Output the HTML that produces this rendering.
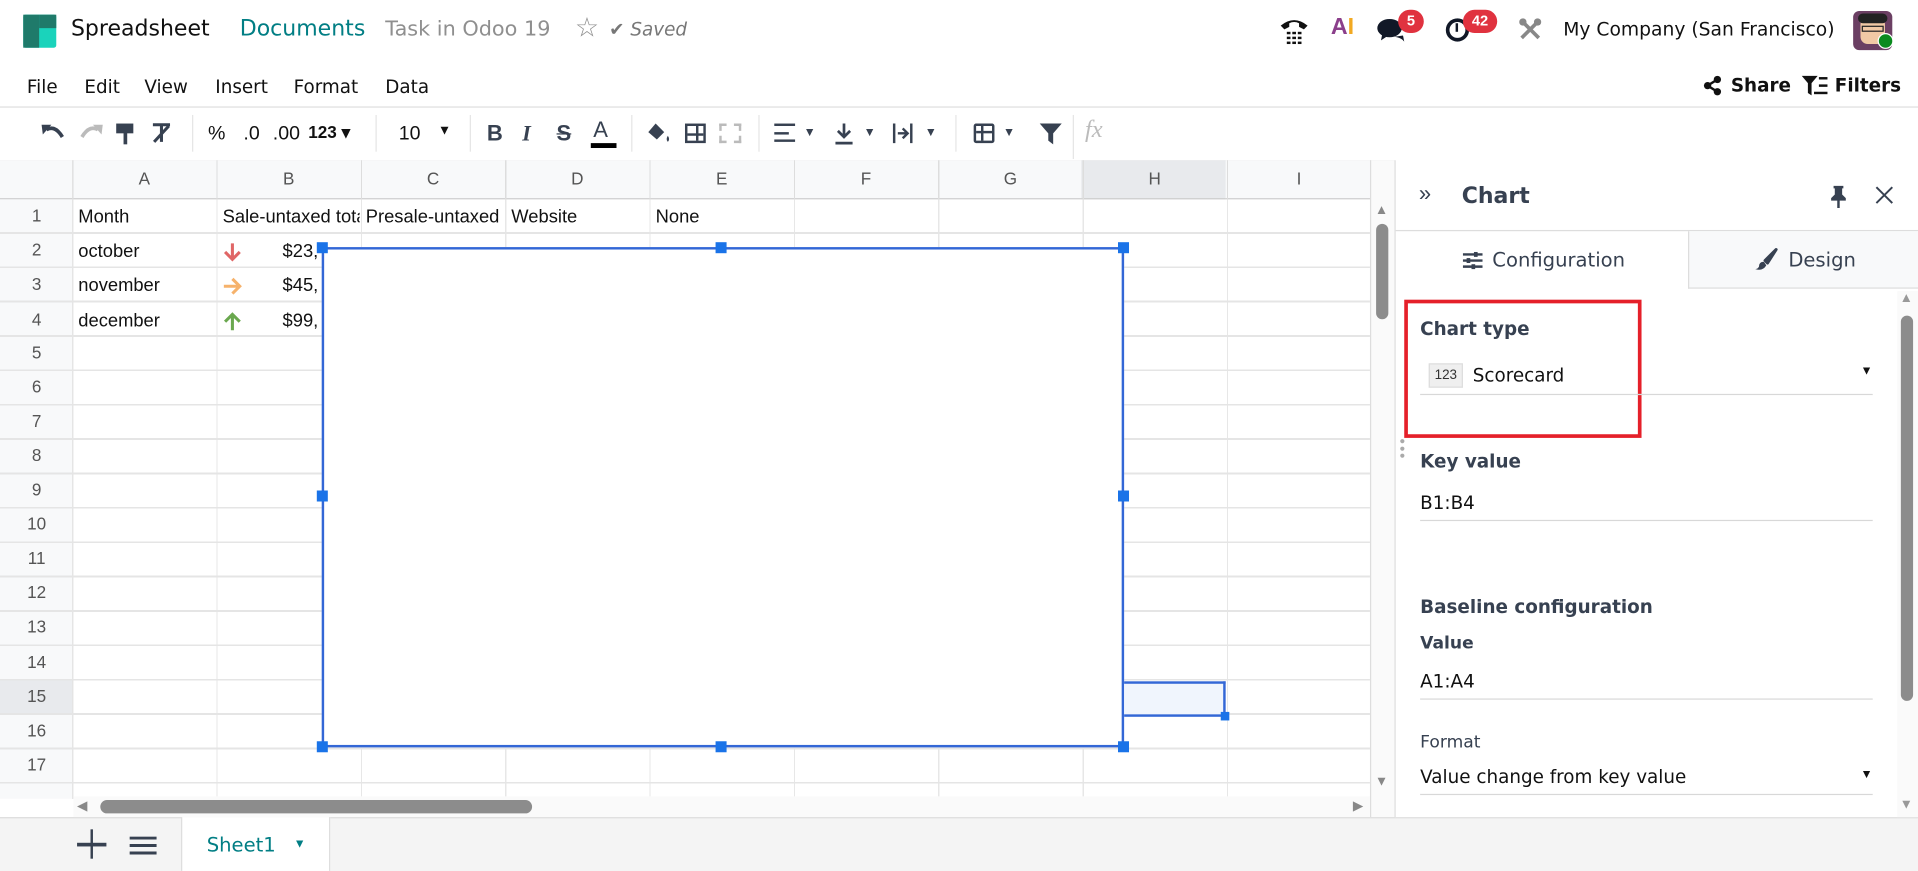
<!DOCTYPE html>
<html><head><meta charset="utf-8">
<style>
*{box-sizing:border-box;margin:0;padding:0}
html,body{width:1918px;height:871px;overflow:hidden;background:#fff}
#s{position:absolute;left:0;top:0;width:1568px;height:712px;transform:scale(1.2232);transform-origin:0 0;font-family:"Liberation Sans",sans-serif;color:#1f2937}
.a{position:absolute}
.t{position:absolute;white-space:nowrap}
.odoo{font-family:"DejaVu Sans","Liberation Sans",sans-serif}
.hdr{color:#555;font-size:14px;text-align:center}
.cell{font-size:15px;color:#111}
.h{position:absolute;width:9px;height:9px;background:#1a73e8}
.lbl{font-family:"DejaVu Sans",sans-serif;font-size:15px;font-weight:bold;color:#374151}
.val{font-family:"DejaVu Sans",sans-serif;font-size:15px;color:#111}
.ul{position:absolute;height:1px;background:#d8d8d8;left:1161px;width:370px}
svg{position:absolute;overflow:visible}
</style></head><body><div id="s">

<!-- top bar -->
<div class="a" style="left:19px;top:12px;width:27px;height:27px;background:#1ad3bb;border-radius:2px"></div>
<div class="a" style="left:19px;top:12px;width:13px;height:27px;background:#1f7a6a"></div>
<div class="a" style="left:32px;top:12px;width:14px;height:11px;background:#1f7a6a"></div>
<div class="t odoo" style="left:58px;top:13px;font-size:18px;color:#111">Spreadsheet</div>
<div class="t odoo" style="left:196px;top:13px;font-size:18px;color:#017e84">Documents</div>
<div class="t odoo" style="left:315px;top:14px;font-size:17px;color:#8f8f8f">Task in Odoo 19</div>
<div class="t" style="left:470px;top:10px;font-size:22px;color:#8f8f8f">☆</div>
<div class="t odoo" style="left:498px;top:15px;font-size:15px;color:#777;font-style:italic">✔ Saved</div>

<svg style="left:1046px;top:13px" width="24" height="24" viewBox="0 0 24 24"><path d="M1 8 Q12 -1 23 8 L20 11 L16 9 L16 6 Q12 4 8 6 L8 9 L4 11 Z" fill="#111"/><g fill="#111"><rect x="6" y="13" width="3" height="2"/><rect x="10.5" y="13" width="3" height="2"/><rect x="15" y="13" width="3" height="2"/><rect x="6" y="17" width="3" height="2"/><rect x="10.5" y="17" width="3" height="2"/><rect x="15" y="17" width="3" height="2"/><rect x="6" y="21" width="3" height="2"/><rect x="10.5" y="21" width="3" height="2"/><rect x="15" y="21" width="3" height="2"/></g></svg>
<div class="t" style="left:1088px;top:12px;font-size:19px;font-weight:bold;color:#8b3f8b">A<span style="color:#f2a922">I</span></div>
<svg style="left:1126px;top:14px" width="26" height="22" viewBox="0 0 26 22"><ellipse cx="10" cy="9" rx="10" ry="7.5" fill="#111827"/><path d="M4 14 L3 19 L9 15Z" fill="#111827"/><path d="M14 16 Q20 17 22 20 L21 15Z" fill="#111827"/></svg>
<div class="a" style="left:1143px;top:8px;width:21px;height:19px;background:#e0323f;border-radius:10px;color:#fff;font-size:12px;font-weight:bold;text-align:center;line-height:19px">5</div>
<div class="a" style="left:1182px;top:15px;width:19px;height:19px;border:3px solid #111827;border-radius:50%"></div>
<div class="a" style="left:1190px;top:19px;width:2px;height:7px;background:#111827"></div>
<div class="a" style="left:1196px;top:8px;width:28px;height:19px;background:#e0323f;border-radius:10px;color:#fff;font-size:12px;font-weight:bold;text-align:center;line-height:19px">42</div>
<svg style="left:1241px;top:14px" width="20" height="20" viewBox="0 0 20 20"><path d="M3 3 L17 17 M17 3 L3 17" stroke="#888" stroke-width="3"/><circle cx="4" cy="4" r="3" fill="#888"/><circle cx="16" cy="4" r="3" fill="#888"/></svg>
<div class="t odoo" style="left:1278px;top:15px;font-size:15.3px;color:#111">My Company (San Francisco)</div>
<div class="a" style="left:1515px;top:9px;width:32px;height:32px;background:#6b3f63;border-radius:5px"></div>
<div class="a" style="left:1521px;top:14px;width:20px;height:22px;background:#f1c9a5;border-radius:6px"></div>
<div class="a" style="left:1519px;top:11px;width:24px;height:8px;background:#222;border-radius:4px"></div>
<div class="a" style="left:1522px;top:21px;width:18px;height:5px;border:1.5px solid #222"></div>
<div class="a" style="left:1535px;top:27px;width:13px;height:13px;background:#0a8a1e;border-radius:50%;border:1px solid #fff"></div>

<!-- menu -->
<div class="t odoo" style="left:22px;top:62px;font-size:15px;color:#111">File</div>
<div class="t odoo" style="left:69px;top:62px;font-size:15px;color:#111">Edit</div>
<div class="t odoo" style="left:118px;top:62px;font-size:15px;color:#111">View</div>
<div class="t odoo" style="left:176px;top:62px;font-size:15px;color:#111">Insert</div>
<div class="t odoo" style="left:240px;top:62px;font-size:15px;color:#111">Format</div>
<div class="t odoo" style="left:315px;top:62px;font-size:15px;color:#111">Data</div>
<svg style="left:1392px;top:62px" width="16" height="16" viewBox="0 0 16 16"><circle cx="12" cy="3" r="3" fill="#111"/><circle cx="4" cy="8" r="3" fill="#111"/><circle cx="12" cy="13" r="3" fill="#111"/><path d="M12 3 L4 8 L12 13" stroke="#111" stroke-width="2" fill="none"/></svg>
<div class="t odoo" style="left:1415px;top:61px;font-size:15px;font-weight:bold;color:#111">Share</div>
<svg style="left:1473px;top:62px" width="22" height="17" viewBox="0 0 22 17"><path d="M0 0 H13 L8 6 V16 L5 14 V6 Z" fill="#111"/><rect x="14" y="1" width="7" height="2" fill="#111"/><rect x="14" y="7" width="7" height="2" fill="#111"/><rect x="10" y="13" width="11" height="2" fill="#111"/></svg>
<div class="t odoo" style="left:1500px;top:61px;font-size:15px;font-weight:bold;color:#111">Filters</div>
<div class="a" style="left:0;top:87px;width:1568px;height:1px;background:#ddd"></div>

<!-- toolbar -->
<svg style="left:34px;top:101px" width="20" height="14" viewBox="0 0 20 14"><path d="M4 5 Q11 1 17 11" stroke="#374151" stroke-width="3" fill="none"/><path d="M0 1 L8 1 L1 9Z" fill="#374151"/></svg>
<svg style="left:64px;top:101px" width="20" height="14" viewBox="0 0 20 14"><path d="M16 5 Q9 1 3 11" stroke="#bbb" stroke-width="3" fill="none"/><path d="M20 1 L12 1 L19 9Z" fill="#bbb"/></svg>
<div class="a" style="left:95px;top:101px;width:14px;height:8px;background:#374151"></div>
<div class="a" style="left:101px;top:108px;width:3px;height:10px;background:#374151"></div>
<svg style="left:124px;top:101px" width="16" height="16" viewBox="0 0 16 16"><path d="M1 1 H15 M8 1 V15 M2 15 L14 2" stroke="#374151" stroke-width="2.5" fill="none"/></svg>
<div class="a" style="left:157px;top:94px;width:1px;height:30px;background:#e5e5e5"></div>
<div class="t" style="left:170px;top:101px;font-size:16px;color:#111">%</div>
<div class="t" style="left:199px;top:101px;font-size:16px;color:#111">.0</div>
<div class="t" style="left:223px;top:101px;font-size:16px;color:#111">.00</div>
<div class="t" style="left:252px;top:100px;font-size:14px;color:#111;font-weight:bold">123 ▾</div>
<div class="a" style="left:307px;top:94px;width:1px;height:30px;background:#e5e5e5"></div>
<div class="t" style="left:326px;top:101px;font-size:16px;color:#111">10</div>
<div class="t" style="left:358px;top:101px;font-size:11px;color:#111">▼</div>
<div class="a" style="left:384px;top:94px;width:1px;height:30px;background:#e5e5e5"></div>
<div class="t" style="left:398px;top:99px;font-size:18px;font-weight:bold;color:#374151">B</div>
<div class="t" style="left:427px;top:99px;font-size:18px;font-weight:bold;font-style:italic;color:#374151;font-family:'Liberation Serif',serif">I</div>
<div class="t" style="left:455px;top:99px;font-size:18px;font-weight:bold;color:#374151"><s>S</s></div>
<div class="t" style="left:485px;top:96px;font-size:18px;color:#374151">A</div>
<div class="a" style="left:483px;top:117px;width:21px;height:4px;background:#000"></div>
<div class="a" style="left:516px;top:94px;width:1px;height:30px;background:#e5e5e5"></div>
<svg style="left:529px;top:100px" width="20" height="18" viewBox="0 0 20 18"><path d="M7 1 L14 8 L8 14 L1 8 Z" fill="#374151"/><path d="M17 11 Q19 14 17 16 Q15 14 17 11Z" fill="#374151"/></svg>
<div class="a" style="left:560px;top:101px;width:17px;height:16px;border:2px solid #374151;background:linear-gradient(#374151,#374151) 6.5px 0/2px 100% no-repeat,linear-gradient(#374151,#374151) 0 5.5px/100% 2px no-repeat"></div>
<div class="a" style="left:588px;top:101px;width:18px;height:16px;border:2px dashed #bbb"></div>
<div class="a" style="left:620px;top:94px;width:1px;height:30px;background:#e5e5e5"></div>
<div class="a" style="left:633px;top:101px;width:17px;height:15px;background:linear-gradient(#374151,#374151) 0 0/100% 2px no-repeat,linear-gradient(#374151,#374151) 0 6.5px/70% 2px no-repeat,linear-gradient(#374151,#374151) 0 13px/100% 2px no-repeat"></div>
<div class="t" style="left:657px;top:103px;font-size:10px;color:#374151">▼</div>
<svg style="left:682px;top:100px" width="16" height="18" viewBox="0 0 16 18"><path d="M8 1 V12 M3 7 L8 12 L13 7 M1 17 H15" stroke="#374151" stroke-width="2.2" fill="none"/></svg>
<div class="t" style="left:706px;top:103px;font-size:10px;color:#374151">▼</div>
<svg style="left:729px;top:100px" width="18" height="18" viewBox="0 0 18 18"><path d="M2 1 V17 M16 1 V17 M5 9 H12 M9 5 L13 9 L9 13" stroke="#374151" stroke-width="2" fill="none"/></svg>
<div class="t" style="left:756px;top:103px;font-size:10px;color:#374151">▼</div>
<div class="a" style="left:781px;top:94px;width:1px;height:30px;background:#e5e5e5"></div>
<div class="a" style="left:796px;top:101px;width:17px;height:16px;border:2px solid #374151;border-radius:2px;background:linear-gradient(#374151,#374151) 0 4px/100% 2px no-repeat,linear-gradient(#374151,#374151) 4px 0/2px 100% no-repeat"></div>
<div class="t" style="left:820px;top:103px;font-size:10px;color:#374151">▼</div>
<svg style="left:850px;top:101px" width="18" height="17" viewBox="0 0 18 17"><path d="M0 0 H18 L11 8 V17 L7 14 V8Z" fill="#374151"/></svg>
<div class="a" style="left:877px;top:94px;width:1px;height:36px;background:#e5e5e5"></div>
<div class="t" style="left:887px;top:95px;font-size:20px;font-style:italic;color:#bbb;font-family:'Liberation Serif',serif">fx</div>
<div class="a" style="left:0;top:131px;width:1140px;height:1px;background:#ddd"></div>

<!-- grid header -->
<div class="a" style="left:0;top:131px;width:1120px;height:32px;background:#f8f9fa;border-bottom:1px solid #ccc"></div>
<div class="a" style="left:884px;top:131px;width:118px;height:32px;background:#e8eaed;border-bottom:1px solid #ccc"></div>
<div class="a" style="left:0;top:163px;width:60px;height:490px;background:#f8f9fa;border-right:1px solid #ccc"></div>
<div class="a" style="left:0;top:556px;width:60px;height:28px;background:#e8eaed;border-right:1px solid #ccc"></div>
<div class="a" style="left:59px;top:131px;width:1060px;height:32px;background:repeating-linear-gradient(90deg,#ddd 0 1px,transparent 1px 118px)"></div>
<div class="a" style="left:59px;top:163px;width:1060px;height:490px;background:repeating-linear-gradient(90deg,#e7e7e7 0 1px,transparent 1px 118px)"></div>
<div class="a" style="left:0;top:163px;width:1120px;height:490px;background:repeating-linear-gradient(180deg,transparent 0 26.6px,#e5e5e5 26.6px 28.1px)"></div>

<div class="t hdr" style="left:59px;top:138px;width:118px">A</div>
<div class="t hdr" style="left:177px;top:138px;width:118px">B</div>
<div class="t hdr" style="left:295px;top:138px;width:118px">C</div>
<div class="t hdr" style="left:413px;top:138px;width:118px">D</div>
<div class="t hdr" style="left:531px;top:138px;width:118px">E</div>
<div class="t hdr" style="left:649px;top:138px;width:118px">F</div>
<div class="t hdr" style="left:767px;top:138px;width:118px">G</div>
<div class="t hdr" style="left:885px;top:138px;width:118px">H</div>
<div class="t hdr" style="left:1003px;top:138px;width:118px">I</div>

<div class="t hdr" style="left:0;top:168px;width:60px">1</div>
<div class="t hdr" style="left:0;top:196px;width:60px">2</div>
<div class="t hdr" style="left:0;top:224px;width:60px">3</div>
<div class="t hdr" style="left:0;top:253px;width:60px">4</div>
<div class="t hdr" style="left:0;top:280px;width:60px">5</div>
<div class="t hdr" style="left:0;top:308px;width:60px">6</div>
<div class="t hdr" style="left:0;top:336px;width:60px">7</div>
<div class="t hdr" style="left:0;top:364px;width:60px">8</div>
<div class="t hdr" style="left:0;top:392px;width:60px">9</div>
<div class="t hdr" style="left:0;top:420px;width:60px">10</div>
<div class="t hdr" style="left:0;top:448px;width:60px">11</div>
<div class="t hdr" style="left:0;top:476px;width:60px">12</div>
<div class="t hdr" style="left:0;top:504px;width:60px">13</div>
<div class="t hdr" style="left:0;top:533px;width:60px">14</div>
<div class="t hdr" style="left:0;top:561px;width:60px">15</div>
<div class="t hdr" style="left:0;top:589px;width:60px">16</div>
<div class="t hdr" style="left:0;top:617px;width:60px">17</div>

<!-- cells -->
<div class="t cell" style="left:64px;top:169px">Month</div>
<div class="t cell" style="left:182px;top:169px;width:112px;overflow:hidden">Sale-untaxed total</div>
<div class="t cell" style="left:299px;top:169px;width:114px;overflow:hidden">Presale-untaxed</div>
<div class="t cell" style="left:418px;top:169px">Website</div>
<div class="t cell" style="left:536px;top:169px">None</div>
<div class="t cell" style="left:64px;top:197px">october</div>
<div class="t cell" style="left:64px;top:225px">november</div>
<div class="t cell" style="left:64px;top:254px">december</div>
<svg style="left:183px;top:198px" width="14" height="16" viewBox="0 0 14 16"><path d="M7 1 V14 M1 8 L7 14 L13 8" stroke="#e06666" stroke-width="2.5" fill="none"/></svg>
<svg style="left:182px;top:227px" width="16" height="14" viewBox="0 0 16 14"><path d="M1 7 H14 M8 1 L14 7 L8 13" stroke="#f6b26b" stroke-width="2.5" fill="none"/></svg>
<svg style="left:183px;top:255px" width="14" height="16" viewBox="0 0 14 16"><path d="M7 15 V2 M1 8 L7 2 L13 8" stroke="#6aa84f" stroke-width="2.5" fill="none"/></svg>
<div class="t cell" style="left:231px;top:197px">$23,</div>
<div class="t cell" style="left:231px;top:225px">$45,</div>
<div class="t cell" style="left:231px;top:254px">$99,</div>

<!-- chart -->
<div class="a" style="left:263px;top:202px;width:656px;height:409px;background:#fff;border:2px solid #3367d6"></div>
<div class="h" style="left:259px;top:198px"></div>
<div class="h" style="left:585px;top:198px"></div>
<div class="h" style="left:914px;top:198px"></div>
<div class="h" style="left:259px;top:401px"></div>
<div class="h" style="left:914px;top:401px"></div>
<div class="h" style="left:259px;top:606px"></div>
<div class="h" style="left:585px;top:606px"></div>
<div class="h" style="left:914px;top:606px"></div>
<div class="a" style="left:919px;top:557px;width:83px;height:29px;background:#f0f5fd;border:2px solid #3367d6;border-left:none"></div>
<div class="a" style="left:998px;top:582px;width:7px;height:7px;background:#1a73e8"></div>

<!-- scrollbars -->
<div class="a" style="left:1120px;top:131px;width:20px;height:537px;background:#fafafa;border-left:1px solid #ddd"></div>
<div class="t" style="left:1124px;top:166px;font-size:11px;color:#888">▲</div>
<div class="a" style="left:1125px;top:183px;width:10px;height:78px;background:#8c8c8c;border-radius:5px"></div>
<div class="t" style="left:1124px;top:633px;font-size:11px;color:#888">▼</div>
<div class="a" style="left:60px;top:651px;width:1060px;height:17px;background:#fafafa"></div>
<div class="t" style="left:63px;top:652px;font-size:11px;color:#888">◀</div>
<div class="a" style="left:82px;top:654px;width:353px;height:11px;background:#8c8c8c;border-radius:6px"></div>
<div class="t" style="left:1106px;top:652px;font-size:11px;color:#888">▶</div>

<!-- bottom bar -->
<div class="a" style="left:0;top:668px;width:1568px;height:44px;background:#f4f4f4;border-top:1px solid #ddd"></div>
<div class="a" style="left:63px;top:689px;width:24px;height:2.5px;background:#374151"></div>
<div class="a" style="left:73.8px;top:678px;width:2.5px;height:24px;background:#374151"></div>
<div class="a" style="left:106px;top:684px;width:22px;height:15px;background:repeating-linear-gradient(#374151 0 2.5px,transparent 2.5px 6px)"></div>
<div class="a" style="left:148px;top:668px;width:122px;height:44px;background:#fff;border-left:1px solid #ddd;border-right:1px solid #ddd"></div>
<div class="t odoo" style="left:169px;top:681px;font-size:16px;color:#017e84">Sheet1</div>
<div class="t" style="left:240px;top:685px;font-size:10px;color:#017e84">▼</div>

<!-- side panel -->
<div class="a" style="left:1140px;top:131px;width:428px;height:537px;background:#fff;border-left:1px solid #ddd"></div>
<div class="t" style="left:1160px;top:148px;font-size:18px;color:#374151">»</div>
<div class="t odoo" style="left:1195px;top:150px;font-size:18px;font-weight:bold;color:#374151">Chart</div>
<svg style="left:1496px;top:152px" width="14" height="18" viewBox="0 0 14 18"><path d="M3 0 H11 V2 H10 V7 L13 10 V12 H1 V10 L4 7 V2 H3Z M6 12 H8 V18 H6Z" fill="#374151"/></svg>
<svg style="left:1534px;top:153px" width="13" height="13" viewBox="0 0 13 13"><path d="M0 0 L13 13 M13 0 L0 13" stroke="#374151" stroke-width="1.6"/></svg>
<div class="a" style="left:1141px;top:188px;width:427px;height:1px;background:#ddd"></div>
<div class="a" style="left:1380px;top:189px;width:188px;height:47px;background:#f8f9fa;border-left:1px solid #ddd;border-bottom:1px solid #ddd"></div>
<svg style="left:1196px;top:206px" width="16" height="14" viewBox="0 0 16 14"><path d="M0 2 H16 M0 7 H16 M0 12 H16" stroke="#374151" stroke-width="2"/><rect x="9" y="0" width="3" height="4" fill="#374151"/><rect x="3" y="5" width="3" height="4" fill="#374151"/><rect x="7" y="10" width="3" height="4" fill="#374151"/></svg>
<div class="t odoo" style="left:1220px;top:203px;font-size:16px;color:#374151">Configuration</div>
<svg style="left:1435px;top:203px" width="18" height="18" viewBox="0 0 18 18"><path d="M17 1 L8 10 L10 12 Z" fill="#374151" stroke="#374151" stroke-width="2.5" stroke-linejoin="round"/><path d="M7 11 Q3 11 3 15 Q2 17 0 17 Q6 19 9 14 Z" fill="#374151"/></svg>
<div class="t odoo" style="left:1462px;top:203px;font-size:16px;color:#374151">Design</div>

<div class="a" style="left:1148px;top:245px;width:194px;height:113px;border:3px solid #e5202a"></div>
<div class="t lbl" style="left:1161px;top:260px">Chart type</div>
<div class="a" style="left:1168px;top:297px;width:28px;height:20px;background:#efefef;border:1px solid #ddd;font-size:11px;color:#333;text-align:center;line-height:18px">123</div>
<div class="t val" style="left:1204px;top:298px">Scorecard</div>
<div class="t" style="left:1521px;top:298px;font-size:10px;color:#111">▼</div>
<div class="ul" style="top:322px"></div>
<div class="t" style="left:1144px;top:358px;font-size:8px;color:#aaa;line-height:6px">●<br>●<br>●</div>

<div class="t lbl" style="left:1161px;top:368px">Key value</div>
<div class="t val" style="left:1161px;top:402px">B1:B4</div>
<div class="ul" style="top:425px"></div>
<div class="t lbl" style="left:1161px;top:487px">Baseline configuration</div>
<div class="t lbl" style="left:1161px;top:518px;font-size:14px">Value</div>
<div class="t val" style="left:1161px;top:548px">A1:A4</div>
<div class="ul" style="top:571px"></div>
<div class="t lbl" style="left:1161px;top:599px;font-size:14px;font-weight:normal">Format</div>
<div class="t val" style="left:1161px;top:626px">Value change from key value</div>
<div class="t" style="left:1521px;top:628px;font-size:10px;color:#111">▼</div>
<div class="ul" style="top:649px"></div>

<div class="a" style="left:1551px;top:238px;width:17px;height:430px;background:#fafafa"></div>
<div class="t" style="left:1553px;top:238px;font-size:11px;color:#999">▲</div>
<div class="a" style="left:1554px;top:258px;width:10px;height:315px;background:#8c8c8c;border-radius:5px"></div>
<div class="t" style="left:1553px;top:652px;font-size:11px;color:#999">▼</div>

</div></body></html>
